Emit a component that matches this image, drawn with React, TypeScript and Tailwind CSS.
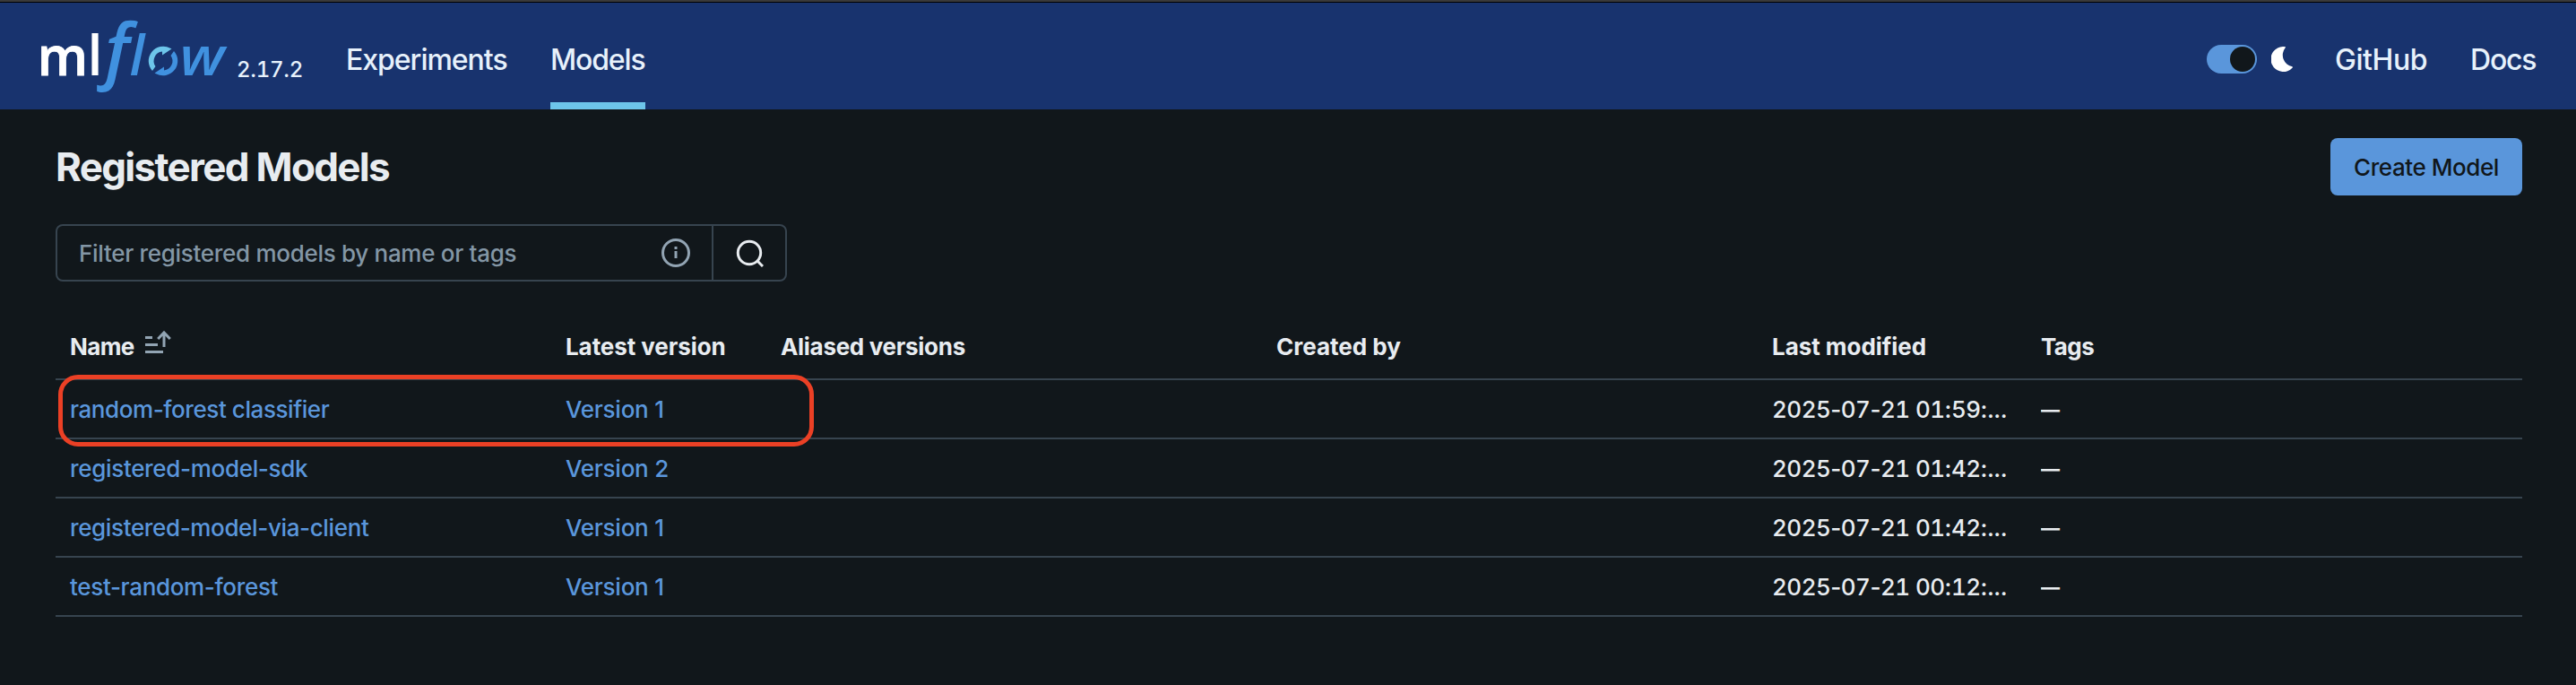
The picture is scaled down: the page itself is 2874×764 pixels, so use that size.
const rows = [
  { name: "random-forest classifier", track: "tracking-[-0.42px]", version: "Version 1", modified: "2025-07-21 01:59:..." },
  { name: "registered-model-sdk", track: "tracking-[-0.32px]", version: "Version 2", modified: "2025-07-21 01:42:..." },
  { name: "registered-model-via-client", track: "tracking-[-0.36px]", version: "Version 1", modified: "2025-07-21 01:42:..." },
  { name: "test-random-forest", track: "tracking-[-0.33px]", version: "Version 1", modified: "2025-07-21 00:12:..." },
];

const COLUMNS = "grid grid-cols-[553px_240px_553px_553px_300px_1fr] items-center border-b-2 border-[#37444f]";

/* Digits share one width while the punctuation keeps its own. */
function Digits({ text }: { text: string }) {
  return (
    <>
      {text.split(/(\d+)/).map((part, i) => (
        <span key={i} className={i % 2 ? "tabular-nums" : ""}>{part}</span>
      ))}
    </>
  );
}

function Logo() {
  return (
    <svg viewBox="40 3 220 119" className="h-[119px] w-[220px] shrink-0 overflow-visible" fontFamily="'Open Sans', 'Noto Sans', sans-serif">
      <g fill="#ffffff" fontWeight={600}>
        <text x="41.7" y="84" fontSize="59" stroke="#ffffff" strokeWidth="0.8">m</text>
        <text x="97.5" y="84" fontSize="61">l</text>
      </g>
      <g fill="#4091df" fontStyle="italic">
        <text x="117" y="83.5" fontSize="80" fontWeight={600}>f</text>
        <text x="144.5" y="84" fontSize="61" fontWeight={600}>l</text>
        <text transform="translate(200.5 84) scale(1.13 1)" x="0" y="0" fontSize="59" fontWeight={600}>w</text>
      </g>
      <path d="M170 79A16.3 16.3 0 0 1 190 53.8L191.5 54.5L181 61.5V57.6A10.4 10.4 0 0 0 173.5 74Z" fill="#6dc5ea" />
      <path d="M194 57A16.3 16.3 0 0 1 174 82.2L172.5 81.5L183 74.5V78.4A10.4 10.4 0 0 0 190.5 62Z" fill="#4091df" />
    </svg>
  );
}

function SortIcon() {
  return (
    <svg viewBox="0 0 32 32" className="ml-[10px] size-8 -translate-y-[3px]" fill="none" stroke="#92a4b3" strokeWidth="3">
      <path d="M2 8.5H10M2 16.5H16M2 24.5H22" />
      <path d="M23 19V3.5M16.2 10L23 3L29.8 10" />
    </svg>
  );
}

export default function App() {
  return (
    <div className="flex h-[764px] w-full flex-col bg-[#11171b] font-['Inter',sans-serif] text-[26px] leading-9 font-[450] text-[#e8ecf0]">
      <div className="h-[3px] shrink-0 border-b border-black bg-[#3a3a3a]" />
      <header className="flex h-[119px] shrink-0 bg-[#18336e] pl-10 text-[32px] text-[#e7f1fb]">
        <Logo />
        <span className="w-[126px] pt-[57px] pl-1 text-2xl leading-9 tracking-[-0.5px]"><Digits text="2.17.2" /></span>
        <nav className="flex">
          <a className="mr-[49px] flex w-[179px] items-center pt-[9px] tracking-[-1.02px]">Experiments</a>
          <a className="flex w-[106px] items-center border-b-8 border-[#6dc5ea] pt-[17px] tracking-[-1.15px]">Models</a>
        </nav>
        <div className="ml-auto flex items-center pr-[43px] pt-[9px]">
          <span className="mb-[2px] flex h-8 w-14 items-center justify-end rounded-full bg-[#5a96db] pr-[2px]">
            <span className="size-7 rounded-full bg-[#11171b]" />
          </span>
          <svg viewBox="0 0 24 28" className="mb-[2px] ml-4 h-7 w-6" fill="#ffffff">
            <path d="M14 0A14 14 0 1 0 24 23.2L23.5 22.2A13 13 0 0 1 15.7 1.2L16 0.2Q15 0 14 0Z" />
          </svg>
          <a className="ml-[47px] w-[151px] tracking-[-0.45px]">GitHub</a>
          <a className="w-[75px] tracking-[-1.2px]">Docs</a>
        </div>
      </header>

      <main className="flex flex-col pt-8 pr-[60px] pl-[62px]">
        <div className="flex h-16 items-center justify-between">
          <h1 className="text-[44px] leading-[56px] font-[650] tracking-[-1.68px]">Registered Models</h1>
          <button className="h-16 w-[214px] rounded-lg bg-[#5a96db] pt-[2px] tracking-[-0.42px] text-[#11171b]">Create Model</button>
        </div>

        <div className="mt-8 flex h-16 w-[816px] rounded-lg border-2 border-[#37444f]">
          <div className="flex flex-1 items-center justify-between pr-6 pl-6 text-[#8396a5]">
            <span className="pt-[2px] tracking-[-0.3px]">Filter registered models by name or tags</span>
            <svg viewBox="0 0 32 32" className="size-8" fill="none" stroke="#92a4b3" strokeWidth="3">
              <circle cx="16" cy="16" r="14.5" />
              <path d="M16 14V22M16 9V12" />
            </svg>
          </div>
          <div className="flex w-[82px] items-center justify-center border-l-2 border-[#37444f]">
            <svg viewBox="0 0 32 32" className="size-8" fill="none" stroke="#e8ecf0" strokeWidth="3">
              <circle cx="16" cy="16" r="12.7" />
              <path d="M25 25L31 31" />
            </svg>
          </div>
        </div>

        <div className="relative mt-[34px]">
          <div className={`${COLUMNS} h-[76px] pt-[3px] font-[650]`}>
            <div className="flex items-center pl-4"><span className="tracking-[-0.6px]">Name</span><SortIcon /></div>
            <div className="pl-4 tracking-[-0.08px]">Latest version</div>
            <div className="pl-4 tracking-[-0.3px]">Aliased versions</div>
            <div className="pl-4">Created by</div>
            <div className="pl-4 tracking-[-0.04px]">Last modified</div>
            <div className="pl-4 tracking-[-0.6px]">Tags</div>
          </div>
          {rows.map((row) => (
            <div key={row.name} className={`${COLUMNS} h-[66px] pt-px`}>
              <a className={`pl-4 text-[#5a96db] ${row.track}`}>{row.name}</a>
              <a className="pl-4 text-[#5a96db] tracking-[-0.25px]">{row.version}</a>
              <span />
              <span />
              <span className="pl-4 tracking-[-0.53px]"><Digits text={row.modified} /></span>
              <span className="pl-4"><span className="inline-block origin-left scale-x-[0.81]">—</span></span>
            </div>
          ))}
          <div className="absolute top-[70px] left-[3px] h-[80px] w-[843px] rounded-[22px] border-[5px] border-[#eb4025]" />
        </div>
      </main>
    </div>
  );
}
